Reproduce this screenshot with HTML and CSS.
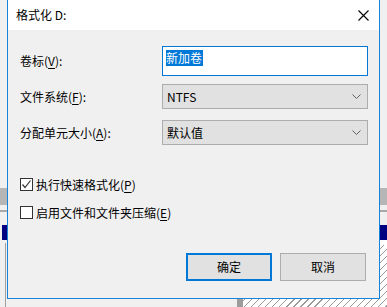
FILE: index.html
```html
<!DOCTYPE html>
<html lang="zh-CN">
<head>
    <meta charset="UTF-8">
    <meta name="viewport" content="width=device-width, initial-scale=1.0">
    <title>格式化 D:</title>
    <link rel="stylesheet" href="styles.css">
</head>
<body>
    <div class="desktop">
        <!-- trozos de la ventana de atrás -->
        <div class="bg-band"></div>
        <div class="bg-line"></div>
        <div class="bg-title"></div>
        <div class="bg-white"></div>
        <div class="bg-hatch"></div>
        <div class="bg-rule"></div>
        <div class="bg-post"></div>

        <div class="dialog">
            <div class="titlebar">
                <span class="title">格式化 D:</span>
                <svg class="close" width="11" height="11" viewBox="0 0 11 11">
                    <path d="M0.5 0.5L10.5 10.5M10.5 0.5L0.5 10.5" stroke="#000" stroke-width="1.1" fill="none"/>
                </svg>
            </div>
            <div class="content">
                <div class="row first">
                    <span class="label">卷标(<u>V</u>):</span>
                    <div class="input"><span class="selected">新加卷</span></div>
                </div>
                <div class="row second">
                    <span class="label">文件系统(<u>F</u>):</span>
                    <div class="select">
                        <span>NTFS</span>
                        <svg class="chevron" width="9" height="5" viewBox="0 0 9 5"><path d="M0.5 0.5L4.5 4.5L8.5 0.5" stroke="#606060" fill="none"/></svg>
                    </div>
                </div>
                <div class="row third">
                    <span class="label">分配单元大小(<u>A</u>):</span>
                    <div class="select">
                        <span>默认值</span>
                        <svg class="chevron" width="9" height="5" viewBox="0 0 9 5"><path d="M0.5 0.5L4.5 4.5L8.5 0.5" stroke="#606060" fill="none"/></svg>
                    </div>
                </div>

                <div class="check first-check">
                    <span class="box">
                        <svg width="11" height="11" viewBox="0 0 11 11"><path d="M1.5 5.5L4 8.5L9.5 1.5" stroke="#333" stroke-width="1.2" fill="none"/></svg>
                    </span>
                    <span>执行快速格式化(<u>P</u>)</span>
                </div>
                <div class="check">
                    <span class="box"></span>
                    <span>启用文件和文件夹压缩(<u>E</u>)</span>
                </div>

                <div class="buttons">
                    <button class="btn default">确定</button>
                    <button class="btn">取消</button>
                </div>
            </div>
        </div>
    </div>
</body>
</html>
```

FILE: styles.css
```css
body {
    margin: 0;
    font-family: "Noto Sans CJK SC", "Noto Sans", sans-serif;
    font-size: 12px;
    color: #000;
    background: #f0f0f0;
    overflow: hidden;
}
.desktop {
    position: relative;
    width: 387px;
    height: 307px;
    overflow: hidden;
}
.bg-band {
    position: absolute;
    left: 0;
    top: 188px;
    width: 387px;
    height: 17px;
    background: #b6b6b6;
}
.bg-line {
    position: absolute;
    left: 0;
    top: 210px;
    width: 387px;
    height: 2px;
    background: #a8a8a8;
}
.bg-title {
    position: absolute;
    left: 2px;
    top: 225px;
    width: 385px;
    height: 15px;
    background: #000080;
}
.bg-white {
    position: absolute;
    left: 243px;
    top: 240px;
    width: 144px;
    height: 5px;
    background: #fff;
}
.bg-hatch {
    position: absolute;
    left: 243px;
    top: 245px;
    width: 144px;
    height: 62px;
    background: repeating-linear-gradient(135deg, #fff 0 4px, #9a9a9a 4px 5px);
}
.bg-rule {
    position: absolute;
    left: 5px;
    top: 243px;
    width: 1px;
    height: 64px;
    background: #a0a0a0;
}
.bg-post {
    position: absolute;
    left: 237px;
    top: 280px;
    width: 6px;
    height: 27px;
    background: #9c9c9c;
}
.dialog {
    position: absolute;
    left: 7px;
    top: -1px;
    width: 373px;
    height: 300px;
    box-sizing: border-box;
    border: 1px solid #1883d7;
    background: #f0f0f0;
    display: flex;
    flex-direction: column;
}
.titlebar {
    height: 30px;
    background: #fff;
    display: flex;
    align-items: center;
    justify-content: space-between;
    padding: 0 10px 0 8px;
}
.title {
    line-height: 16px;
}
.close {
    display: block;
}
.content {
    padding: 0 11px 0 12px;
    line-height: 16px;
}
.row {
    display: flex;
    align-items: center;
    justify-content: space-between;
}
.row.first {
    margin-top: 16px;
}
.row.second {
    margin-top: 8px;
}
.row.third {
    margin-top: 11px;
}
u {
    text-decoration-thickness: 1px;
    text-underline-offset: 2px;
}
.input {
    box-sizing: border-box;
    width: 206px;
    height: 30px;
    border: 1px solid #0078d7;
    background: #fff;
    padding: 3px 0 0 3px;
}
.selected {
    display: inline-block;
    background: #0078d7;
    color: #fff;
    line-height: 16px;
    padding-right: 1px;
}
.select {
    box-sizing: border-box;
    width: 206px;
    height: 25px;
    border: 1px solid #adadad;
    background: #e1e1e1;
    display: flex;
    align-items: center;
    justify-content: space-between;
    padding: 0 6px 0 4px;
}
.chevron {
    display: block;
}
.check {
    display: flex;
    align-items: center;
    height: 13px;
    margin-top: 15px;
}
.check.first-check {
    margin-top: 33px;
}
.box {
    box-sizing: border-box;
    width: 13px;
    height: 13px;
    border: 1px solid #333;
    background: #fff;
    margin-right: 3px;
    flex: none;
}
.box svg {
    display: block;
}
.buttons {
    display: flex;
    justify-content: flex-end;
    gap: 8px;
    margin-top: 34px;
    margin-right: 2px;
}
.btn {
    box-sizing: border-box;
    width: 86px;
    height: 28px;
    border: 1px solid #adadad;
    background: #e1e1e1;
    font-family: inherit;
    font-size: 12px;
    color: #000;
    padding: 0;
    line-height: 16px;
}
.btn.default {
    border: 2px solid #0078d7;
}
```
